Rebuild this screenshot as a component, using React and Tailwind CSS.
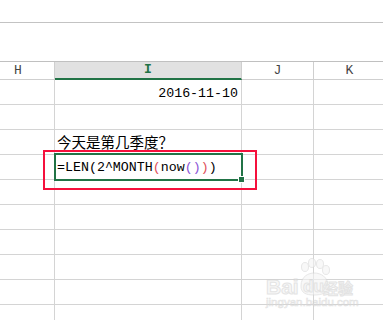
export default function App() {
  const dataRows = 10;
  const cell = "h-[25px] border-r border-b border-[#d4d4d4] box-border";
  const rows = Array.from({ length: dataRows }, (_, i) => i);
  return (
    <div className="relative w-[383px] h-[320px] overflow-hidden bg-white font-['Liberation_Mono',monospace] text-black">
      <div className="h-[22px]" />
      <div className="h-[39px] border-t border-[#c3c3c3]" />
      {/* header row */}
      <div className="grid grid-cols-[55px_187px_72px_1fr] border-t border-[#c0c0c0]">
        <div className="h-[18px] border-r border-b border-[#cfcfcf] flex items-end justify-center pl-[0px] pr-[18px] text-[13px] leading-[16px] text-[#444]">
          <span className="pl-[-18px] -ml-[18px] pr-[0px] translate-x-[0px]" style={{ marginLeft: 0 }}>H</span>
        </div>
        <div className="h-[18px] bg-[#e1e1e1] border-r border-[#cfcfcf] border-b-2 border-b-[#217346] flex items-end justify-center text-[13px] leading-[16px] text-[#217346]">
          <span className="font-bold">I</span>
        </div>
        <div className="h-[18px] border-r border-b border-[#cfcfcf] flex items-end justify-center text-[13px] leading-[16px] text-[#444]">
          J
        </div>
        <div className="h-[18px] border-b border-[#cfcfcf] flex items-end justify-center pl-[2px] text-[13px] leading-[16px] text-[#444]">
          K
        </div>
      </div>
      {rows.map((r) => (
        <div key={r} className="grid grid-cols-[55px_187px_72px_1fr]">
          <div className={cell} />
          <div className={cell + " flex items-end"}>
            {r === 0 && (
              <span className="w-full text-right pr-[3px] text-[13.3px] leading-[16px] pb-[2px]">2016-11-10</span>
            )}
            {r === 2 && (
              <span className="pl-[2px] text-[14.5px] leading-[18px] pb-[3px] font-['Noto_Sans_CJK_SC','Noto_Sans_CJK_JP',sans-serif]">
                今天是第几季度？
              </span>
            )}
            {r === 3 && (
              <span className="pl-[2px] text-[13.3px] leading-[16px] pb-[3px] whitespace-pre">
                =LEN(2^MONTH<span className="text-[#e0505a]">(</span>now<span className="text-[#8b55d6]">()</span><span className="text-[#e0505a]">)</span>)
              </span>
            )}
          </div>
          <div className={cell} />
          <div className="h-[25px] border-b border-[#d4d4d4]" />
        </div>
      ))}

      {/* selection box */}
      <div className="absolute left-[54px] top-[153px] w-[189px] h-[28px] border-2 border-[#217346]" />
      <div className="absolute left-[238px] top-[176px] w-[7px] h-[7px] bg-[#217346] border border-white" />

      {/* red annotation */}
      <div className="absolute left-[43px] top-[150px] w-[214px] h-[40px] border-2 border-[#f5103c]" />

      {/* watermark */}
      <div className="absolute left-[265px] top-[258px] w-[95px] h-[55px] opacity-60">
        <svg width="95" height="40" viewBox="0 0 95 40" className="absolute left-0 top-0">
          <g fill="#f4f4f4" stroke="#d8d8d8" strokeWidth="1">
            <ellipse cx="40" cy="9" rx="3.5" ry="4.5" />
            <ellipse cx="47" cy="5" rx="3.5" ry="4.5" />
            <ellipse cx="55" cy="6" rx="3.5" ry="4.5" />
            <ellipse cx="61" cy="12" rx="3.5" ry="4.5" />
            <path d="M36 28 C36 18 44 15 49 15 C56 15 63 19 63 28 C63 35 57 37 49 37 C41 37 36 35 36 28 Z" />
          </g>
        </svg>
        <span className="absolute left-[1px] top-[18px] text-[21px] leading-[22px] font-bold font-['Liberation_Sans',sans-serif] text-[#f2f2f2] [-webkit-text-stroke:1px_#d2d2d2]">
          Bai
        </span>
        <span className="absolute left-[38px] top-[19px] text-[17px] leading-[20px] font-bold font-['Liberation_Sans',sans-serif] text-[#f2f2f2] [-webkit-text-stroke:1px_#d2d2d2]">
          du
        </span>
        <span className="absolute left-[58px] top-[21px] text-[15px] leading-[18px] font-bold font-['Noto_Sans_CJK_SC',sans-serif] text-[#f2f2f2] [-webkit-text-stroke:1px_#d2d2d2]">
          经验
        </span>
        <span className="absolute left-[1px] top-[37px] text-[11.5px] leading-[14px] font-['Liberation_Sans',sans-serif] text-[#f2f2f2] [-webkit-text-stroke:0.6px_#d0d0d0]">
          jingyan.baidu.com
        </span>
      </div>
    </div>
  );
}
